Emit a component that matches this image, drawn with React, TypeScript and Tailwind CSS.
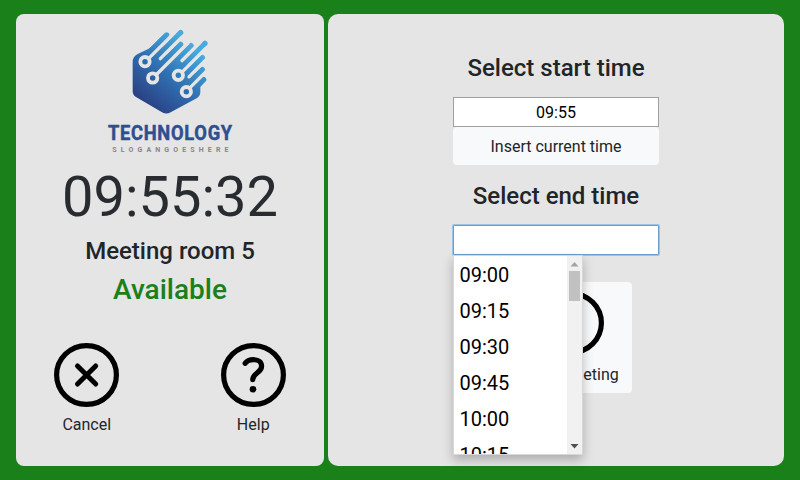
import React from "react";

const times = ["09:00", "09:15", "09:30", "09:45", "10:00", "10:15"];

function Logo() {
  return (
    <svg className="h-[134px] w-[140px] shrink-0 overflow-visible" viewBox="0 0 420 402">
      <defs>
        <linearGradient id="blue" gradientUnits="userSpaceOnUse" x1="125" y1="235" x2="270" y2="60">
          <stop offset="0" stopColor="#2a3f82" />
          <stop offset="0.5" stopColor="#2f70b2" />
          <stop offset="1" stopColor="#46ace0" />
        </linearGradient>
      </defs>
      <path
        fill="url(#blue)"
        d="M98 115Q98 97 113 90L146 74Q153 70 160 62L196 27L205 37L180 85L225 100L262 118L285 145L301 170V205Q301 216 290 223L212 265Q199 272 186 265L108 219Q98 213 98 201Z"
      />
      <g stroke="url(#blue)" strokeWidth="16" strokeLinecap="round" fill="none">
        <path d="M200 33L150 83M242 26L150 118M242 61L180 123M273 65L200 138M315 58L225 148M307 101L250 158M307 137L260 184M311 167L280 198" />
      </g>
      <g stroke="#e5e5e5" strokeWidth="10" strokeLinecap="round" fill="none">
        <path d="M144 105.500L222 27.500M181 104L245 40M168 153L264 57M246 110L300 56M244 146.500L318 72.500M267 158.500L316 109.500M268 193L318 143" />
      </g>
      <g fill="url(#blue)" stroke="#e5e5e5" strokeWidth="11.500">
        <circle cx="135" cy="113" r="14" />
        <circle cx="158" cy="162" r="14" />
        <circle cx="235" cy="154" r="14" />
        <circle cx="259" cy="203" r="14" />
      </g>
      <g transform="translate(24 347) scale(0.87 1)">
        <text x="0" y="0" textLength="428" fontSize="63" fontWeight="700" fill="#2d4f90" stroke="#2d4f90" strokeWidth="1.500" strokeLinejoin="round" className="font-[Roboto,sans-serif]">TECHNOLOGY</text>
      </g>
      <g transform="translate(37 384) scale(0.88 1)">
        <text x="0" y="0" textLength="396" fontSize="24" fontWeight="700" fill="#858585" className="font-[Roboto,sans-serif]">SLOGANGOESHERE</text>
      </g>
    </svg>
  );
}

function CircleIcon({ children }: { children?: React.ReactNode }) {
  return (
    <svg className="block h-16 w-[65px]" viewBox="0 0 65 64" preserveAspectRatio="none" fill="none" stroke="#000" strokeLinecap="round" strokeLinejoin="round">
      <ellipse cx="32.5" cy="32" rx="29.900" ry="29.400" strokeWidth="5.200" />
      {children}
    </svg>
  );
}

function TimeMenu() {
  return (
    <div className="absolute top-[30px] left-0 z-10 flex h-[200px] w-[130px] border border-[#d8d8d8] bg-white shadow-[0_5px_10px_rgba(0,0,0,0.25)]">
      <ul className="flex-1 overflow-hidden pt-px pl-[5.5px] text-xl leading-9 text-black">
        {times.map((t) => (
          <li key={t}>{t}</li>
        ))}
      </ul>
      <div className="flex w-[15px] flex-col items-center bg-[#f1f1f1]">
        <svg className="h-[15px] w-[15px]" viewBox="0 0 15 15"><path d="M3.500 10.500L7.500 6L11.500 10.500Z" fill="#a3a3a3" /></svg>
        <div className="h-[30px] w-[11px] bg-[#c1c1c1]" />
        <svg className="mt-auto h-[15px] w-[15px]" viewBox="0 0 15 15"><path d="M3.500 5L7.500 9.500L11.500 5Z" fill="#505050" /></svg>
      </div>
    </div>
  );
}

export default function App() {
  return (
    <main className="flex h-[480px] w-[800px] gap-1 bg-[#1a801a] px-4 py-3.5 font-[Roboto,sans-serif] text-base text-[#212529]">
      <section className="flex w-[308px] flex-col items-center rounded-lg bg-[#e5e5e5] pt-2.5">
        <Logo />
        <div className="mt-1.5 text-[56px] leading-[67px] text-[#282c31]">09:55:32</div>
        <h2 className="mt-1.5 text-2xl leading-[29px] font-medium">Meeting room 5</h2>
        <h1 className="mt-[7px] text-[28px] leading-[34px] font-medium text-[#1a801a]">Available</h1>
        <div className="mt-9 flex w-full justify-between px-[38px]">
          <button className="flex flex-col items-center gap-1.5">
            <CircleIcon>
              <path d="M23.500 23L41.700 41M41.700 23L23.500 41" strokeWidth="5" />
            </CircleIcon>
            <span className="ml-[0.5px]">Cancel</span>
          </button>
          <button className="flex flex-col items-center gap-1.5">
            <CircleIcon>
              <path d="M24.200 20.300C27.500 15.600 40.600 14.600 40.600 23.200C40.600 30 31.500 30 31.700 36.700" strokeWidth="5.200" />
              <circle cx="32" cy="46.300" r="3.300" fill="#000" stroke="none" />
            </CircleIcon>
            <span className="mr-[0.5px]">Help</span>
          </button>
        </div>
      </section>
      <section className="flex w-[456px] flex-col items-center rounded-[10px] bg-[#e5e5e5] pt-10">
        <h2 className="text-2xl leading-[29px] font-medium">Select start time</h2>
        <div className="mt-3.5 flex h-[30px] w-[206px] items-center justify-center border border-[#a0a0a0] bg-white pt-0.5 text-black">09:55</div>
        <button className="h-[38px] w-[206px] rounded bg-[#f8f9fa] pt-0.5">Insert current time</button>
        <h2 className="mt-[17px] text-2xl leading-[29px] font-medium">Select end time</h2>
        <div className="relative mt-3.5 h-[30px] w-[206px] rounded-[1px] border border-[#6a9fd0] bg-white shadow-[0_0_0_1px_#9cc2e4]">
          <div className="absolute -top-px -left-px">
            <TimeMenu />
          </div>
        </div>
        <button className="mt-[27px] ml-[31px] flex h-[111px] w-[121px] flex-col items-center gap-2 rounded bg-[#f8f9fa] pt-[9px] leading-6">
          <CircleIcon />
          <span className="mr-0.5">Start meeting</span>
        </button>
      </section>
    </main>
  );
}
